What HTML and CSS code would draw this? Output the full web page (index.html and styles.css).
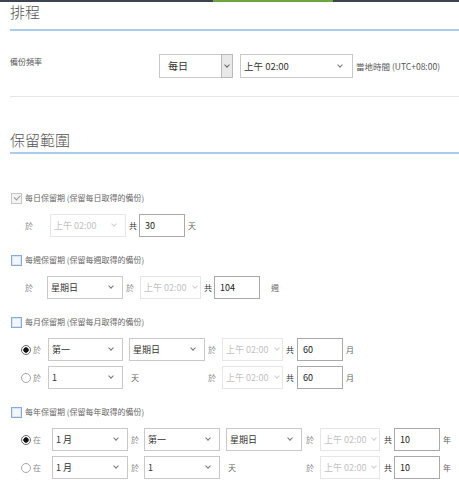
FILE: index.html
```html
<!DOCTYPE html>
<html lang="zh-Hant">
<head>
<meta charset="utf-8">
<title>排程</title>
<link rel="stylesheet" href="styles.css">
</head>
<body>
<div class="topbar"><span class="tb-a"></span><span class="tb-g"></span><span class="tb-b"></span></div>
<div class="page">
  <h2 class="title title-first">排程</h2>
  <div class="freq-row">
    <span class="freq-label">備份頻率</span>
    <div class="sel sel-freq"><span>每日</span></div>
    <div class="sel-btn"></div>
    <div class="sel sel-time"><span>上午 02:00</span></div>
    <span class="tz">當地時間 (UTC+08:00)</span>
  </div>
  <div class="sep"></div>
  <h2 class="title title-second">保留範圍</h2>

  <div class="group g1">
    <div class="cbrow"><span class="cb cb-dis"></span>每日保留期 (保留每日取得的備份)</div>
    <div class="opt">
      <span class="l ml15">於</span>
      <div class="sel dis w76 ml17"><span>上午 02:00</span></div>
      <span class="l k ml3">共</span>
      <div class="inp ml2">30</div>
      <span class="l u ml3">天</span>
    </div>
  </div>

  <div class="group">
    <div class="cbrow"><span class="cb"></span>每週保留期 (保留每週取得的備份)</div>
    <div class="opt">
      <span class="l ml15">於</span>
      <div class="sel w76 ml14"><span>星期日</span></div>
      <span class="l ml3">於</span>
      <div class="sel dis narrow w61 ml6"><span>上午 02:00</span></div>
      <span class="l k ml3">共</span>
      <div class="inp ml2">104</div>
      <span class="l u ml11">週</span>
    </div>
  </div>

  <div class="group">
    <div class="cbrow"><span class="cb"></span>每月保留期 (保留每月取得的備份)</div>
    <div class="opt">
      <span class="radio on ml11"></span>
      <span class="l ml2">於</span>
      <div class="sel w75 ml7"><span>第一</span></div>
      <div class="sel w76 ml6"><span>星期日</span></div>
      <span class="l ml3">於</span>
      <div class="sel dis narrow w61 ml6"><span>上午 02:00</span></div>
      <span class="l k ml3">共</span>
      <div class="inp ml3">60</div>
      <span class="l u ml3">月</span>
    </div>
    <div class="opt">
      <span class="radio ml11"></span>
      <span class="l ml2">於</span>
      <div class="sel w75 ml7"><span>1</span></div>
      <span class="l u ml8">天</span>
      <span class="l ml69">於</span>
      <div class="sel dis narrow w61 ml6"><span>上午 02:00</span></div>
      <span class="l k ml3">共</span>
      <div class="inp ml3">60</div>
      <span class="l u ml3">月</span>
    </div>
  </div>

  <div class="group">
    <div class="cbrow"><span class="cb"></span>每年保留期 (保留每年取得的備份)</div>
    <div class="opt">
      <span class="radio on ml11"></span>
      <span class="l ml2">在</span>
      <div class="sel w76 ml11"><span>1 月</span></div>
      <span class="l ml3">於</span>
      <div class="sel w76 ml5"><span>第一</span></div>
      <div class="sel w76 ml6"><span>星期日</span></div>
      <span class="l ml4">於</span>
      <div class="sel dis narrow w60 ml6"><span>上午 02:00</span></div>
      <span class="l k ml4">共</span>
      <div class="inp ml2">10</div>
      <span class="l u ml3">年</span>
    </div>
    <div class="opt">
      <span class="radio ml11"></span>
      <span class="l ml2">在</span>
      <div class="sel w76 ml11"><span>1 月</span></div>
      <span class="l ml3">於</span>
      <div class="sel w76 ml5"><span>1</span></div>
      <span class="l u ml8">天</span>
      <span class="l ml70">於</span>
      <div class="sel dis narrow w60 ml6"><span>上午 02:00</span></div>
      <span class="l k ml4">共</span>
      <div class="inp ml2">10</div>
      <span class="l u ml3">年</span>
    </div>
  </div>
</div>
</body>
</html>
```

FILE: styles.css
```css
html, body { margin: 0; padding: 0; }
html { overflow: hidden; }
body {
  font-family: "Noto Sans CJK TC", "Noto Sans", sans-serif;
  color: #444;
  background: #fff;
  width: 459px;
}
.topbar { display: flex; height: 2px; }
.tb-a { width: 213px; background: #3b4450; }
.tb-g { width: 120px; background: #6ea544; }
.tb-b { flex: 1; background: #3b4450; }

.page { padding-left: 10px; }

.title {
  font-weight: 300;
  font-size: 15px;
  line-height: 15px;
  color: #555;
  margin: 0;
  border-bottom: 2px solid #a9cdee;
}
.title-first { margin-top: 2px; padding-bottom: 10px; }
.title-second { margin-top: 35px; padding-bottom: 5px; }

.freq-row { display: flex; margin-top: 23px; height: 24px; }
.freq-label {
  flex: none;
  width: 149px;
  font-size: 8px;
  line-height: 10px;
  padding-top: 3px;
  color: #555;
}
.sep { height: 1px; background: #e6e6e6; margin-top: 18px; }

.sel {
  box-sizing: border-box;
  flex: none;
  display: flex;
  align-items: center;
  justify-content: space-between;
  height: 23px;
  border: 1px solid #c9c9c9;
  background: #fff;
  font-size: 9px;
  line-height: 12px;
  color: #333;
  padding: 0 9px 0 3px;
  white-space: nowrap;
}
.sel::after {
  content: "";
  flex: none;
  width: 3px;
  height: 3px;
  border-right: 1px solid #777;
  border-bottom: 1px solid #777;
  transform: rotate(45deg);
  margin-top: -3px;
}
.sel-freq {
  width: 62px;
  height: 24px;
  font-size: 10px;
  padding-left: 8px;
  border-right: none;
}
.sel-freq::after { display: none; }
.sel-btn {
  box-sizing: border-box;
  flex: none;
  width: 12px;
  height: 24px;
  border: 1px solid #b9b9b9;
  background: #e9e9e9;
  display: flex;
  align-items: center;
  justify-content: center;
}
.sel-btn::after {
  content: "";
  width: 3px;
  height: 3px;
  border-right: 1px solid #666;
  border-bottom: 1px solid #666;
  transform: rotate(45deg);
  margin-top: -3px;
}
.sel-time {
  width: 113px;
  height: 24px;
  margin-left: 7px;
  font-size: 9.5px;
  padding-right: 10px;
}
.tz {
  flex: none;
  margin-left: 3px;
  font-size: 8.5px;
  line-height: 24px;
  color: #555;
  white-space: nowrap;
}

.group { margin-top: 16px; }
.g1 { margin-top: 37px; }
.cbrow {
  display: flex;
  align-items: center;
  height: 14px;
  font-size: 8px;
  line-height: 10px;
  color: #666;
  white-space: nowrap;
}
.cb {
  box-sizing: border-box;
  flex: none;
  width: 11px;
  height: 11px;
  margin-left: 1px;
  margin-right: 3px;
  border: 1px solid #86acd9;
  background: #f3f7fc;
  box-shadow: inset 0 0 0 1px #d6e4f4;
  display: flex;
  align-items: center;
  justify-content: center;
}
.cb-dis { border-color: #c6c6c6; background: #f4f4f4; box-shadow: none; }
.cb-dis::after {
  content: "";
  width: 5px;
  height: 2.5px;
  border-left: 1px solid #9a9a9a;
  border-bottom: 1px solid #9a9a9a;
  transform: rotate(-45deg);
  margin-top: -2px;
}

.opt {
  display: flex;
  align-items: center;
  height: 23px;
  margin-top: 9px;
  font-size: 8px;
  line-height: 10px;
  color: #8a8a8a;
}
.opt + .opt { margin-top: 5px; }
.l { flex: none; width: 8px; white-space: nowrap; }
.k { color: #333; }
.u { color: #666; }

.dis { border-color: #e6e6e6; color: #c2c2c2; }
.dis::after { border-color: #cfcfcf; }
.narrow { padding-right: 3px; }

.inp {
  box-sizing: border-box;
  flex: none;
  width: 46px;
  height: 23px;
  border: 1px solid #a9a9a9;
  font-size: 9px;
  color: #222;
  padding-left: 5px;
  display: flex;
  align-items: center;
}

.radio {
  box-sizing: border-box;
  flex: none;
  width: 10px;
  height: 10px;
  border-radius: 50%;
  border: 1px solid #a8a8a8;
  background: #fff;
}
.radio.on {
  border-color: #666;
  background: radial-gradient(circle, #111 0, #111 2.4px, #fff 3px);
}

.w60 { width: 60px; }
.w61 { width: 61px; }
.w75 { width: 75px; }
.w76 { width: 76px; }

.ml2 { margin-left: 2px; }
.ml3 { margin-left: 3px; }
.ml4 { margin-left: 4px; }
.ml5 { margin-left: 5px; }
.ml6 { margin-left: 6px; }
.ml7 { margin-left: 7px; }
.ml8 { margin-left: 8px; }
.ml11 { margin-left: 11px; }
.ml14 { margin-left: 14px; }
.ml15 { margin-left: 15px; }
.ml17 { margin-left: 17px; }
.ml69 { margin-left: 69px; }
.ml70 { margin-left: 70px; }
```
